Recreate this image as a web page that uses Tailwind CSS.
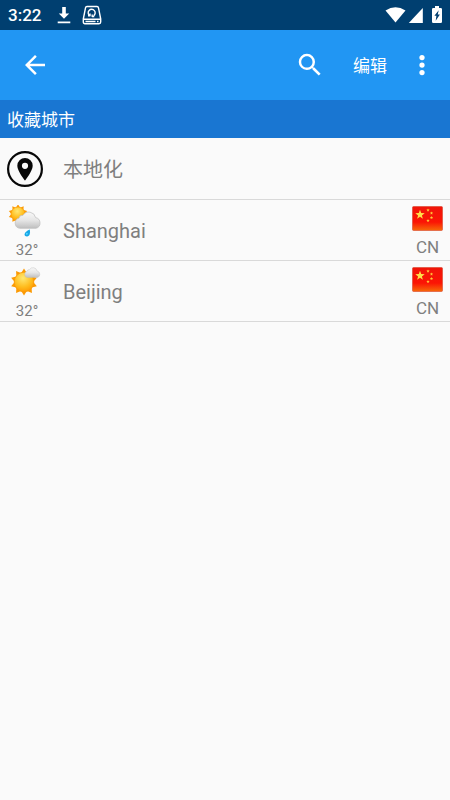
<!DOCTYPE html>
<html lang="zh-CN">
<head>
<meta charset="utf-8">
<meta name="viewport" content="width=device-width, initial-scale=1">
<title>收藏城市</title>
<script src="https://cdn.jsdelivr.net/npm/@tailwindcss/browser@4"></script>
</head>
<body class="min-h-screen bg-[#fafafa] font-[Roboto,'Noto_Sans_CJK_SC',sans-serif] text-[#7f7f7f]">
<svg class="absolute size-0" aria-hidden="true">
  <defs>
    <radialGradient id="sunFill" cx=".45" cy=".3" r=".75"><stop offset="0" stop-color="#ffe873"/><stop offset=".6" stop-color="#ffbd1f"/><stop offset="1" stop-color="#ff9700"/></radialGradient>
    <linearGradient id="cloudFill" x1="0" y1="0" x2="0" y2="1"><stop offset="0" stop-color="#f8f8f8"/><stop offset=".5" stop-color="#e6e6e6"/><stop offset="1" stop-color="#bfbfbf"/></linearGradient>
    <linearGradient id="flagFill" x1="0" y1="0" x2="0" y2="1"><stop offset="0" stop-color="#f01408"/><stop offset=".65" stop-color="#fb1505"/><stop offset="1" stop-color="#f76a08"/></linearGradient>
    <symbol id="sun" viewBox="-14 -14 28 28">
      <g fill="#fb9a04"><path id="ray" d="M0-13.500 3.500-8H-3.500Z"/><use href="#ray" transform="rotate(36)"/><use href="#ray" transform="rotate(72)"/><use href="#ray" transform="rotate(108)"/><use href="#ray" transform="rotate(144)"/><use href="#ray" transform="rotate(180)"/><use href="#ray" transform="rotate(216)"/><use href="#ray" transform="rotate(252)"/><use href="#ray" transform="rotate(288)"/><use href="#ray" transform="rotate(324)"/></g>
      <circle r="9.800" fill="url(#sunFill)" stroke="#fb9b08" stroke-width=".8"/>
    </symbol>
    <symbol id="cloud" viewBox="0 0 28 18">
      <path d="M6 17.300a5.200 5.200 0 0 1-1-10.200A3.600 3.600 0 0 1 9 4.300 6.900 6.900 0 0 1 21.600 6.600a5.500 5.500 0 0 1 .4 10.700Z" fill="url(#cloudFill)" stroke="#bdbdbd" stroke-width=".7"/>
    </symbol>
    <symbol id="flag" viewBox="0 0 31 25">
      <rect x=".5" y=".5" width="30" height="24" rx="1" fill="url(#flagFill)" stroke="#d8452b" stroke-opacity=".6"/>
      <path d="M8 3.700 9.200 7.100 12.700 7.200 9.900 9.400 10.900 12.800 8 10.800 5.100 12.800 6.100 9.400 3.300 7.200 6.800 7.100Z" fill="#ffe04a"/>
      <g fill="#ffc83a"><use href="#smallstar" x="16" y="4"/><use href="#smallstar" x="19.500" y="7"/><use href="#smallstar" x="19.500" y="11.500"/><use href="#smallstar" x="16" y="14.500"/></g>
    </symbol>
    <path id="smallstar" d="M0-1.600.5-.5 1.600-.4.7.4 1 1.500 0 .9-1 1.500-.7.4-1.600-.4-.5-.5Z"/>
  </defs>
</svg>

<div class="flex h-[30px] items-center bg-[#003f70] pl-2 pr-[7px] text-white">
  <time class="text-[17px] font-medium leading-5">3:22</time>
  <svg class="ml-4 h-5 w-3.5" viewBox="0 0 14 20" fill="currentColor" aria-hidden="true"><path d="M5.200 2h3.600v6.500h3.400L7 13.700 1.800 8.500h3.400ZM.7 16.600h12.600v1.700H.7z"/></svg>
  <svg class="ml-[11px] size-5" viewBox="0 0 20 20" fill="none" stroke="currentColor" stroke-width="1.400" stroke-linejoin="round" aria-hidden="true"><path d="M5 1.500h10q1.300 0 1.500 1.300L18.700 14v3q0 1.700-1.700 1.700H3q-1.700 0-1.700-1.700v-3L3.500 2.800Q3.700 1.500 5 1.500ZM1.800 14.300h16.400M3.500 16.500h10M15 16.500h1.500"/><path d="M7.700 10.700A3.500 3.500 0 1 1 11.500 10.800M6 10.800h2V8.600M12.300 11.600H10.200V9.600"/></svg>
  <div class="ml-auto flex items-center">
    <svg class="h-5 w-[21px]" viewBox="0 0 21 20" fill="currentColor" aria-hidden="true"><path d="M.5 5.500Q10.500-1 20.500 5.500L10.500 17.500Z"/></svg>
    <svg class="ml-0.5 h-5 w-4" viewBox="0 0 16 20" fill="currentColor" aria-hidden="true"><path d="M14.800 3v15H.8Z"/></svg>
    <svg class="ml-[7px] h-5 w-3" viewBox="0 0 12 20" aria-hidden="true"><path fill="currentColor" d="M4 1h4v2h1.700q1.300 0 1.300 1.300v12.400q0 1.300-1.300 1.300H2.300Q1 18 1 16.700V4.300Q1 3 2.300 3H4Z"/><path d="M7.700 5.200 3.400 10.800h2L4.700 15.700 8.900 9.600H6.700Z" fill="#003f70"/></svg>
  </div>
</div>

<header class="flex h-[70px] items-center bg-[#2196f3] text-white">
  <button type="button" aria-label="返回" class="ml-[17px] flex size-9 items-center justify-center"><svg class="size-[30px]" viewBox="0 0 24 24" fill="currentColor"><path d="M20 11H7.830l5.590-5.590L12 4l-8 8 8 8 1.410-1.410L7.830 13H20z"/></svg></button>
  <button type="button" aria-label="搜索" class="ml-auto flex size-9 items-center justify-center"><svg class="size-[30px]" viewBox="0 0 24 24" fill="currentColor"><path d="M15.500 14h-.790l-.280-.270A6.470 6.470 0 0 0 16 9.500 6.500 6.500 0 1 0 9.500 16c1.610 0 3.090-.590 4.230-1.570l.270.280v.790l5 4.990L20.490 19l-4.990-5zm-6 0C7.010 14 5 11.990 5 9.500S7.010 5 9.500 5 14 7.010 14 9.500 11.990 14 9.500 14z"/></svg></button>
  <button type="button" class="ml-[25px] pt-0.5 text-[17px] leading-6">编辑</button>
  <button type="button" aria-label="更多" class="ml-[17px] mr-[10px] flex size-9 items-center justify-center"><svg class="size-[30px]" viewBox="0 0 24 24" fill="currentColor"><circle cx="12" cy="6" r="2.100"/><circle cx="12" cy="12" r="2.100"/><circle cx="12" cy="18" r="2.100"/></svg></button>
</header>

<main>
  <h1 class="flex h-[38px] items-center bg-[#1976d2] px-[7px] pt-0.5 text-[17px] leading-6 text-white">收藏城市</h1>
  <ul class="pt-px">
    <li class="border-b border-[#d9d9d9]">
      <a href="#local" class="flex h-[60px] items-center px-[7px]">
        <svg class="size-9" viewBox="0 0 36 36" aria-hidden="true"><circle cx="18" cy="18" r="16.900" fill="none" stroke="#080808" stroke-width="2.200"/><path fill="#080808" fill-rule="evenodd" d="M18 7a7.700 7.700 0 0 0-7.700 7.700C10.300 20 18 29.500 18 29.500S25.700 20 25.700 14.700A7.700 7.700 0 0 0 18 7Zm0 4.700a3.100 3.100 0 1 1 0 6.200 3.100 3.100 0 0 1 0-6.200Z"/></svg>
        <span class="ml-5 pt-0.5 text-[20px] leading-6">本地化</span>
      </a>
    </li>
    <li class="border-b border-[#d9d9d9]">
      <a href="#shanghai" class="flex h-[60px] items-center px-[7px]">
        <span class="flex w-9 flex-col items-center pt-[3px]">
          <svg class="h-9 w-9" viewBox="0 0 36 36" role="img" aria-label="晴间多云有小雨"><use href="#sun" x="1" y="-1" width="20" height="20"/><use href="#cloud" x="7" y="6" width="28" height="18"/><path d="M22.700 24.500c.9 3.200 0 7-2.700 7-3.700 0-3.500-4.500 2.700-7Z" fill="#16a7e6"/><circle cx="19.800" cy="28.700" r="1" fill="#54d2ff"/></svg>
          <span class="pl-1 text-[15px] leading-[18px]">32°</span>
        </span>
        <span class="ml-5 pt-0.5 text-[20px] leading-6">Shanghai</span>
        <span class="ml-auto flex flex-col items-center pt-1"><svg class="h-[25px] w-[31px]" role="img" aria-label="中国"><use href="#flag"/></svg><span class="mt-[5px] text-[17px] leading-[22px]">CN</span></span>
      </a>
    </li>
    <li class="border-b border-[#d9d9d9]">
      <a href="#beijing" class="flex h-[60px] items-center px-[7px]">
        <span class="flex w-9 flex-col items-center pt-[3px]">
          <svg class="h-9 w-9" viewBox="0 0 36 36" role="img" aria-label="晴间少云"><use href="#sun" x="3" y="2" width="28" height="28"/><use href="#cloud" x="17" y="1" width="17" height="11"/></svg>
          <span class="pl-1 text-[15px] leading-[18px]">32°</span>
        </span>
        <span class="ml-5 pt-0.5 text-[20px] leading-6">Beijing</span>
        <span class="ml-auto flex flex-col items-center pt-1"><svg class="h-[25px] w-[31px]" role="img" aria-label="中国"><use href="#flag"/></svg><span class="mt-[5px] text-[17px] leading-[22px]">CN</span></span>
      </a>
    </li>
  </ul>
</main>
</body>
</html>
